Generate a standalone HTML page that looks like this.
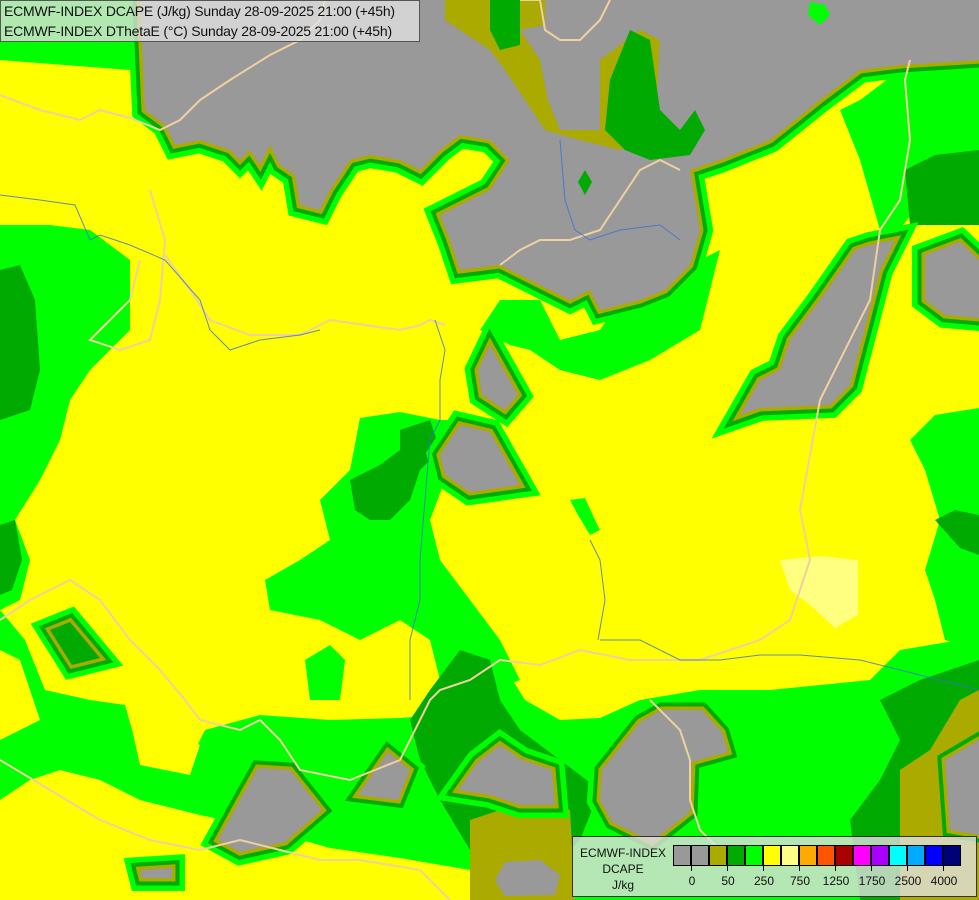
<!DOCTYPE html>
<html><head><meta charset="utf-8"><style>
html,body{margin:0;padding:0;background:#ff0}
.w{position:relative;width:979px;height:900px;overflow:hidden;font-family:"Liberation Sans",sans-serif}
svg{position:absolute;left:0;top:0}
.t{position:absolute;left:0;top:0;width:420px;height:42px;background:rgba(225,225,225,0.78);border:1px solid #555;font-size:14px;line-height:20px;color:#111;padding-left:3px;box-sizing:border-box;white-space:nowrap;letter-spacing:-0.2px}
.lg{position:absolute;left:572px;top:836px;width:405px;height:61px;background:rgba(225,225,225,0.8);border:1px solid #333;box-sizing:border-box;font-size:12px;color:#111}
.lg .n{position:absolute;left:4px;top:8px;width:92px;text-align:center;line-height:16px}
.sw{position:absolute;top:8px;height:21px;width:18px;border:1px solid #000;box-sizing:border-box}
.lb{position:absolute;top:37px;font-size:12px;transform:translateX(-50%)}
.tk{position:absolute;top:29px;width:1px;height:5px;background:#000}
</style></head><body><div class="w">
<svg width="979" height="900" viewBox="0 0 979 900">
<defs>
<polygon id="gA" points="140,0 980,0 980,60 900,65 860,70 820,100 770,140 720,160 690,170 700,230 690,265 665,290 640,300 600,310 590,290 570,300 550,290 500,265 460,270 450,240 440,215 470,200 490,190 510,160 490,140 460,135 440,150 420,170 400,160 370,155 350,160 330,190 320,210 300,205 295,175 280,165 270,145 260,165 250,150 240,160 230,150 200,140 175,145 165,125 145,110"/>
<polygon id="gB" points="740,415 760,408 830,405 850,385 880,270 895,240 870,245 855,250 820,300 790,340 780,370 760,380"/>
<polygon id="gC" points="925,255 960,242 979,260 979,318 945,315 925,300"/>
<polygon id="gD" points="440,455 460,425 490,432 520,485 470,492 445,475"/>
<polygon id="gE" points="478,370 490,345 518,395 505,410 482,395"/>
<polygon id="gF" points="218,840 240,800 258,768 290,770 322,810 285,842 240,852"/>
<polygon id="gG" points="358,795 388,752 410,770 398,800"/>
<polygon id="gH" points="458,790 478,762 500,745 522,760 552,770 555,805 520,805 490,795"/>
<polygon id="gI" points="602,770 640,722 662,710 702,710 722,732 728,752 692,762 690,812 652,842 612,822 600,800"/>
<polygon id="gJ" points="945,760 979,740 979,835 950,830"/>
<polygon id="gK" points="140,870 172,868 172,878 142,878"/>
<polygon id="gL" points="50,630 70,622 100,658 72,665"/>
</defs>
<polygon fill="#0f0" points="0,0 140,0 140,90 130,70 0,60"/>
<polygon fill="#0f0" points="0,225 50,225 90,230 130,260 130,330 90,370 70,400 60,440 40,480 15,520 30,560 20,600 0,610"/>
<polygon fill="#0a0" points="0,270 20,265 35,300 40,370 30,410 0,420"/>
<polygon fill="#0a0" points="0,525 15,520 22,560 12,590 0,595"/>
<polygon fill="#0f0" points="360,418 400,412 440,420 460,420 480,430 500,470 520,490 470,498 445,480 430,520 440,560 470,600 500,640 520,680 470,700 440,680 430,640 400,620 360,640 320,620 270,610 265,580 300,560 330,540 320,500 350,470"/>
<polygon fill="#0f0" points="480,330 500,300 540,300 560,340 600,330 620,300 680,290 700,260 720,250 700,330 650,360 600,380 560,370 530,350 510,345"/>
<polygon fill="#0a0" points="350,480 380,465 400,450 420,470 410,500 390,520 370,520 355,510"/>
<polygon fill="#0a0" points="400,430 430,420 440,450 420,470 400,460"/>
<polygon fill="#0f0" points="305,660 330,645 345,660 340,700 310,700"/>
<polygon fill="#0f0" points="570,500 585,498 595,520 600,530 590,535 578,515"/>
<polygon fill="#0f0" points="979,70 900,70 860,100 840,110 860,160 880,230 895,235 915,210 935,165 979,150"/>
<polygon fill="#0a0" points="905,170 935,155 979,150 979,225 910,225"/>
<polygon fill="#0f0" points="910,440 935,415 979,408 979,650 945,640 935,600 925,570 940,520 925,470"/>
<polygon fill="#0a0" points="935,520 955,510 979,515 979,555 960,548"/>
<!-- bottom green band -->
<polygon fill="#0f0" points="0,610 25,640 45,690 90,700 125,705 135,740 190,760 205,730 260,715 330,720 400,718 440,715 460,690 480,700 500,660 525,700 560,720 600,718 640,700 700,690 770,690 870,680 900,650 960,640 979,640 979,900 0,900"/>
<polygon fill="#ff0" points="0,900 0,800 30,780 60,770 100,780 140,800 200,815 260,828 330,848 400,858 470,870 470,900"/>
<polygon fill="#ff0" points="0,650 20,660 40,720 0,740"/>
<polygon fill="#ff0" points="130,720 140,715 200,745 190,775 140,765"/>
<polygon fill="#0a0" points="430,690 460,650 490,660 500,700 520,730 560,760 600,790 580,840 560,860 500,870 470,850 440,800 420,760 410,720"/>
<polygon fill="#0a0" points="880,700 920,680 979,660 979,900 860,900 850,820 880,780 900,740"/>
<polygon fill="#0a0" points="48,630 70,612 100,650 102,665 75,668"/>
<polygon fill="#aa0" points="470,820 500,810 540,800 570,810 575,900 470,900"/>
<polygon fill="#999" points="495,880 505,862 540,860 560,875 555,895 505,896"/>
<polygon fill="#aa0" points="900,770 930,750 960,700 979,690 979,900 900,900"/>
<g fill="none" stroke-linejoin="miter" stroke-miterlimit="3">
<g stroke="#0f0" stroke-width="26"><use href="#gA"/><use href="#gB"/><use href="#gC"/><use href="#gD"/><use href="#gE"/><use href="#gF"/><use href="#gG"/><use href="#gH"/><use href="#gI"/><use href="#gK"/><use href="#gL"/></g>
<g stroke="#0a0" stroke-width="15"><use href="#gA"/><use href="#gB"/><use href="#gC"/><use href="#gD"/><use href="#gE"/><use href="#gF"/><use href="#gG"/><use href="#gH"/><use href="#gI"/><use href="#gJ"/><use href="#gK"/><use href="#gL"/></g>
<g stroke="#aa0" stroke-width="7"><use href="#gA"/><use href="#gB"/><use href="#gC"/><use href="#gD"/><use href="#gE"/><use href="#gF"/><use href="#gG"/><use href="#gH"/><use href="#gI"/><use href="#gJ"/><use href="#gK"/><use href="#gL"/></g>
</g>
<g fill="#999"><use href="#gA"/><use href="#gB"/><use href="#gC"/><use href="#gD"/><use href="#gE"/><use href="#gF"/><use href="#gG"/><use href="#gH"/><use href="#gI"/><use href="#gJ"/><use href="#gK"/></g>
<polygon fill="#0a0" points="50,630 70,622 100,658 72,665"/>
<polygon fill="#aa0" points="445,0 545,0 545,25 520,30 540,60 548,100 560,130 600,130 600,60 640,30 660,40 655,130 620,150 580,140 545,130 525,100 505,70 490,50 445,20"/>
<polygon fill="#0a0" points="605,130 610,80 630,30 650,40 660,110 680,130 695,110 705,130 690,155 650,160 625,150"/>
<polygon fill="#0a0" points="490,0 520,0 520,45 500,50 490,30"/>
<polygon fill="#0f0" points="810,2 825,5 830,15 820,25 808,15"/>
<polygon fill="#0a0" points="578,182 585,170 592,182 585,195"/>
<polygon fill="#ffff80" points="780,560 820,556 858,560 858,615 835,628 810,605 790,590"/>
<g fill="none" stroke="#f0d0a0" stroke-width="2">
<polyline points="0,95 40,110 80,120 100,110 130,118 160,130 180,120 200,100 230,80 270,55 300,40 320,20 325,0"/>
<polyline points="150,190 165,240 160,300 150,340 120,350 90,340 100,330 130,300 140,260"/>
<polyline points="165,255 190,290 210,320 250,335 300,335 330,320 400,330 420,325 430,320 445,325"/>
<polyline points="0,620 30,600 70,580 100,600 130,640 160,670 185,700 200,720 240,730 260,720 280,740 300,770 350,780 400,760 430,700 440,690 470,680 500,660 540,665 580,650 630,660 700,660 760,640 790,620 800,590 810,560 800,510 820,400 870,300 880,230 900,200 910,140 905,80 910,60"/>
<polyline points="520,0 540,0 545,30 560,40 580,40 600,20 610,0"/>
<polyline points="680,170 660,160 640,170 620,200 600,230 570,240 540,240 520,250 500,265"/>
<polyline points="0,760 50,790 100,820 150,840 200,850 240,840 280,850 320,860 360,860 420,870 450,900"/>
<polyline points="650,700 680,730 690,760 690,800 700,830 720,850"/>
</g>
<g fill="none" stroke="#3a6fd8" stroke-width="1" opacity="0.8">
<polyline points="0,195 40,200 75,205 90,240 100,235 130,245 165,260 200,300 210,330 230,350 260,340 300,335 320,330"/>
<polyline points="435,320 445,350 440,380 440,420 430,440 425,500 420,560 420,600 410,640 410,700"/>
<polyline points="560,140 565,200 575,230 590,240 620,230 660,225 680,240"/>
<polyline points="590,540 600,560 605,600 598,640"/>
<polyline points="600,640 640,640 680,660 720,660 760,655 800,655 860,660 900,670 979,690"/>
</g>
</svg>
<div class="t">ECMWF-INDEX DCAPE (J/kg) Sunday 28-09-2025 21:00 (+45h)<br>ECMWF-INDEX DThetaE (°C) Sunday 28-09-2025 21:00 (+45h)</div>
<div class="lg">
<div class="n">ECMWF-INDEX<br>DCAPE<br>J/kg</div>
<div class="sw" style="left:100px;background:#999"></div>
<div class="sw" style="left:118px;background:#999"></div>
<div class="sw" style="left:136px;background:#aa0"></div>
<div class="sw" style="left:154px;background:#0a0"></div>
<div class="sw" style="left:172px;background:#0f0"></div>
<div class="sw" style="left:190px;background:#ff0"></div>
<div class="sw" style="left:208px;background:#ff8"></div>
<div class="sw" style="left:226px;background:#fa0"></div>
<div class="sw" style="left:244px;background:#f50"></div>
<div class="sw" style="left:262px;background:#a00"></div>
<div class="sw" style="left:280px;background:#f0f"></div>
<div class="sw" style="left:298px;background:#a0f"></div>
<div class="sw" style="left:316px;background:#0ff"></div>
<div class="sw" style="left:334px;background:#0af"></div>
<div class="sw" style="left:352px;background:#00f"></div>
<div class="sw" style="left:370px;background:#007"></div>
<div class="tk" style="left:118px"></div><div class="lb" style="left:119px">0</div>
<div class="tk" style="left:154px"></div><div class="lb" style="left:155px">50</div>
<div class="tk" style="left:190px"></div><div class="lb" style="left:191px">250</div>
<div class="tk" style="left:226px"></div><div class="lb" style="left:227px">750</div>
<div class="tk" style="left:262px"></div><div class="lb" style="left:263px">1250</div>
<div class="tk" style="left:298px"></div><div class="lb" style="left:299px">1750</div>
<div class="tk" style="left:334px"></div><div class="lb" style="left:335px">2500</div>
<div class="tk" style="left:370px"></div><div class="lb" style="left:371px">4000</div>
</div>
</div></body></html>
